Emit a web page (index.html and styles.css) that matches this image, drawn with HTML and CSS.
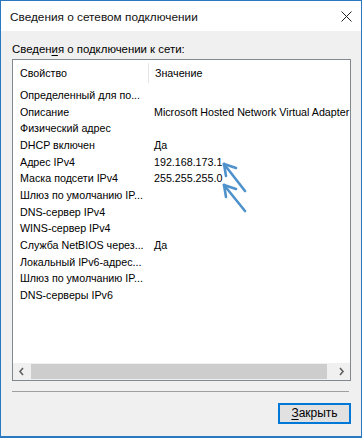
FILE: index.html
```html
<!DOCTYPE html>
<html lang="ru">
<head>
<meta charset="utf-8">
<title>Сведения о сетевом подключении</title>
<link rel="stylesheet" href="styles.css">
</head>
<body>
<div class="window">
  <div class="titlebar">
    <span class="title">Сведения о сетевом подключении</span>
    <svg class="close" width="11" height="11" viewBox="0 0 11 11"><path d="M0.5 0.5 L10.5 10.5 M10.5 0.5 L0.5 10.5" stroke="#222" stroke-width="1" fill="none"/></svg>
  </div>
  <div class="content">
    <div class="label">Сведен<u>и</u>я о подключении к сети:</div>
    <div class="listbox">
      <div class="header">
        <div class="hcell c1">Свойство</div>
        <div class="hcell c2">Значение</div>
      </div>
      <div class="rows">
        <div class="row"><span class="c1">Определенный для по...</span><span class="c2"></span></div>
        <div class="row"><span class="c1">Описание</span><span class="c2">Microsoft Hosted Network Virtual Adapter</span></div>
        <div class="row"><span class="c1">Физический адрес</span><span class="c2"></span></div>
        <div class="row"><span class="c1">DHCP включен</span><span class="c2">Да</span></div>
        <div class="row"><span class="c1">Адрес IPv4</span><span class="c2">192.168.173.1</span></div>
        <div class="row"><span class="c1">Маска подсети IPv4</span><span class="c2">255.255.255.0</span></div>
        <div class="row"><span class="c1">Шлюз по умолчанию IP...</span><span class="c2"></span></div>
        <div class="row"><span class="c1">DNS-сервер IPv4</span><span class="c2"></span></div>
        <div class="row"><span class="c1">WINS-сервер IPv4</span><span class="c2"></span></div>
        <div class="row"><span class="c1">Служба NetBIOS через...</span><span class="c2">Да</span></div>
        <div class="row"><span class="c1">Локальный IPv6-адрес...</span><span class="c2"></span></div>
        <div class="row"><span class="c1">Шлюз по умолчанию IP...</span><span class="c2"></span></div>
        <div class="row"><span class="c1">DNS-серверы IPv6</span><span class="c2"></span></div>
      </div>
      <div class="hscroll">
        <svg class="arrow" width="17" height="17" viewBox="0 0 17 17"><path d="M10 5 L7 8.5 L10 12" stroke="#606060" stroke-width="1.6" fill="none"/></svg>
        <div class="track"><div class="thumb"></div></div>
        <svg class="arrow" width="17" height="17" viewBox="0 0 17 17"><path d="M7 5 L10 8.5 L7 12" stroke="#606060" stroke-width="1.6" fill="none"/></svg>
      </div>
    </div>
    <div class="separator"></div>
    <div class="footer">
      <button class="btn"><u>З</u>акрыть</button>
    </div>
  </div>
  <svg class="marks" width="362" height="438" viewBox="0 0 362 438">
    <g stroke="#3d87c6" stroke-width="2.6" stroke-linecap="round" fill="none" opacity="0.9">
      <path d="M224 164 L245 191"/>
      <path d="M224 164 L236 168"/>
      <path d="M224 164 L226 176"/>
      <path d="M224 185 L245 211"/>
      <path d="M224 185 L236 189"/>
      <path d="M224 185 L226 197"/>
    </g>
  </svg>
</div>
</body>
</html>
```

FILE: styles.css
```css
* { box-sizing: border-box; }
html, body { margin: 0; padding: 0; }
body {
  width: 362px;
  height: 438px;
  font-family: "Liberation Sans", Arial, sans-serif;
  color: #000;
  background: #f0f0f0;
}
.window {
  position: relative;
  width: 362px;
  height: 438px;
  border: 1px solid #2a78c2;
  border-bottom-width: 2px;
  display: flex;
  flex-direction: column;
  background: #f0f0f0;
}
.titlebar {
  height: 30px;
  background: #fff;
  display: flex;
  align-items: center;
  justify-content: space-between;
  padding: 0 9px 0 9px;
}
.title {
  font-size: 11.8px;
  color: #111;
  padding-top: 1px;
}
.close { margin-top: 1px; }
.content {
  flex: 1;
  display: flex;
  flex-direction: column;
  padding: 10px 10px 0 11px;
}
.label {
  font-size: 11.4px;
  height: 18px;
  line-height: 16px;
}
.label u, .btn u { text-decoration-thickness: 1px; text-underline-offset: 2px; }
.listbox {
  height: 322px;
  background: #fff;
  border: 1px solid #828790;
  display: flex;
  flex-direction: column;
  font-size: 10.7px;
}
.header {
  height: 26px;
  display: flex;
  align-items: center;
}
.hcell { height: 20px; line-height: 20px; }
.c1 { width: 135px; padding-left: 7px; flex: none; white-space: nowrap; }
.c2 { padding-left: 6px; white-space: nowrap; }
.hcell.c2 { border-left: 1px solid #e5e5e5; }
.rows { padding-top: 1px; }
.row {
  height: 16.67px;
  line-height: 16.67px;
  display: flex;
}
.hscroll {
  margin-top: auto;
  height: 17px;
  display: flex;
  background: #f0f0f0;
}
.arrow { flex: none; }
.track {
  flex: 1;
  display: flex;
  align-items: center;
  padding: 0 1px;
}
.thumb {
  width: 296px;
  height: 15px;
  background: #cdcdcd;
}
.separator {
  height: 1px;
  background: #a0a0a0;
  margin: 10px 2px 0 0;
}
.footer {
  display: flex;
  justify-content: flex-end;
  padding-top: 11px;
}
.btn {
  width: 73px;
  height: 21px;
  border: 2px solid #0078d7;
  background: #e1e1e1;
  font-family: "Liberation Sans", Arial, sans-serif;
  font-size: 12px;
  color: #000;
  padding: 0;
  line-height: 15px;
}
.marks {
  position: absolute;
  left: -1px;
  top: -1px;
  pointer-events: none;
}
```
